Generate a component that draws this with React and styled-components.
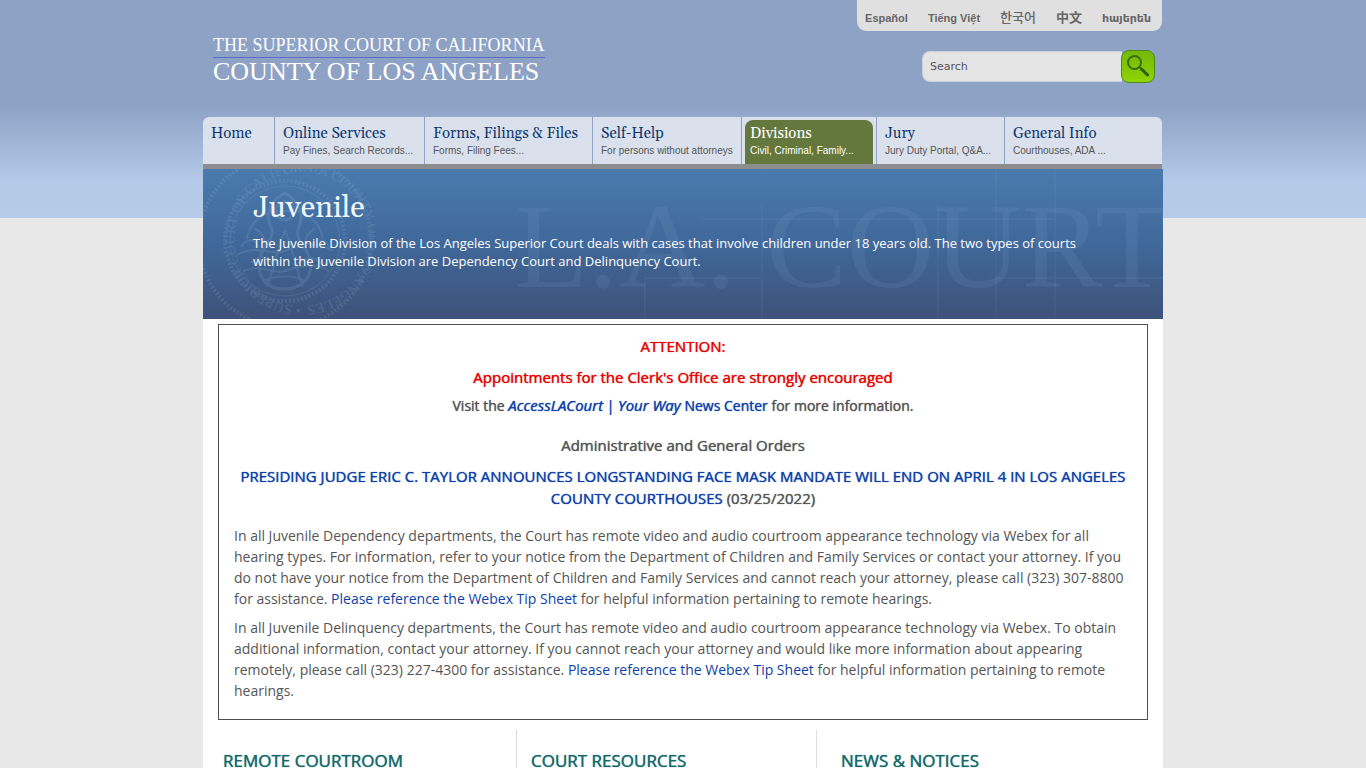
import styled, { createGlobalStyle, css } from 'styled-components';

const languages = [
  { label: 'Español', lang: 'es' },
  { label: 'Tiếng Việt', lang: 'vi' },
  { label: '한국어', lang: 'ko' },
  { label: '中文', lang: 'zh' },
  { label: 'հայերեն', lang: 'hy' },
];

const navItems = [
  { title: 'Home', hint: '', width: 71 },
  { title: 'Online Services', hint: 'Pay Fines, Search Records...', width: 149 },
  { title: 'Forms, Filings & Files', hint: 'Forms, Filing Fees...', width: 167 },
  { title: 'Self-Help', hint: 'For persons without attorneys', width: 148 },
  { title: 'Divisions', hint: 'Civil, Criminal, Family...', width: 134, active: true },
  { title: 'Jury', hint: 'Jury Duty Portal, Q&A...', width: 127 },
  { title: 'General Info', hint: 'Courthouses, ADA ...', width: 157 },
];

const sections = ['Remote Courtroom', 'Court Resources', 'News & Notices'];

function SearchIcon() {
  return <svg width="26" height="26" viewBox="0 0 26 26" fill="none" aria-hidden="true">
    <circle cx="9.5" cy="8.5" r="6.5" stroke="#35700c" strokeWidth="2"/>
    <path d="M14.2 13l2.5 2.3" stroke="#35700c" strokeWidth="2"/>
    <path d="M16.7 15.3l5.8 5.5" stroke="#35600f" strokeWidth="3.2" strokeLinecap="round"/>
  </svg>
}

function Seal() {
  return <SealSvg viewBox="0 0 180 180" aria-hidden="true">
    <defs>
      <path id="seal-ring" d="M106 155a67 67 0 1 1 1 0"/>
    </defs>
    <g fill="none" stroke="#a9c8e6">
      <circle cx="90" cy="90" r="86" strokeWidth="4" strokeDasharray="2 2"/>
      <circle cx="90" cy="90" r="60" strokeWidth="4" strokeDasharray="2 2"/>
      <circle cx="90" cy="90" r="55"/>
      <path strokeWidth="3" d="M90 42c-16 8-20 22-14 34s-14 22-12 40 14 22 26 22 26-8 26-24-18-24-12-38-2-26-14-34z"/>
      <path strokeWidth="2" d="M42 104c20-12 34 2 48-4s28-12 48 0M48 120c18-8 30 4 42 0s30-10 44 0M78 60c-14 4-24 14-26 28M102 60c14 4 24 14 26 28M72 136c8-20 10-40 18-56M108 136c-8-20-10-40-18-56M60 78c8 4 12 12 8 20M120 78c-8 4-12 12-8 20"/>
      <path strokeWidth="2" d="M46 96c6-10 14-8 18 0M116 96c6-10 14-8 18 0M56 112c10-10 18-6 24 4M100 116c8-10 18-12 26-4M70 130c8-6 32-6 40 0M66 66c8-8 40-8 48 0"/>
      <circle cx="90" cy="60" r="9" strokeWidth="3"/>
    </g>
    <text fill="#c0d8ee" fontSize="14">
      <textPath href="#seal-ring">• SUPERIOR COURT OF CALIFORNIA COUNTY OF LOS ANGELES</textPath>
    </text>
  </SealSvg>
}

function Blueprint() {
  return <BlueprintSvg viewBox="0 0 520 150" aria-hidden="true">
    <path
      d="M2 150v-41h117M119 150V36M60 50h59M119 50h176M295 36v114M353 0v150M353 109h167M412 0v150M295 50h117"
      fill="none" stroke="#9fbfe2" strokeWidth="2"/>
  </BlueprintSvg>
}

function Header() {
  return <HeaderContainer>
    <LogoLink href="#home">
      <LogoTop>THE SUPERIOR COURT OF CALIFORNIA</LogoTop>
      <LogoBottom>COUNTY OF LOS ANGELES</LogoBottom>
    </LogoLink>
    <HeaderTools>
      <LanguageBar aria-label="Languages">
        { languages.map(({ label, lang }) => <LanguageLink key={lang} lang={lang} href={`#${lang}`}>
          { label }
        </LanguageLink>) }
      </LanguageBar>
      <SearchForm role="search" onSubmit={(e) => e.preventDefault()}>
        <SearchInput type="text" placeholder="Search" aria-label="Search"/>
        <SearchButton type="submit" aria-label="Submit search">
          <SearchIcon/>
        </SearchButton>
      </SearchForm>
    </HeaderTools>
  </HeaderContainer>
}

function Navigation() {
  return <NavContainer>
    { navItems.map(({ title, hint, width, active }) => <NavCell key={title} $basis={width}>
      <NavLink href="#nav" $active={active}>
        <NavTitle $active={active}>{ title }</NavTitle>
        <NavHint>{ hint }</NavHint>
      </NavLink>
    </NavCell>) }
  </NavContainer>
}

function Banner() {
  return <BannerContainer>
    <Seal/>
    <Blueprint/>
    <BannerMark aria-hidden="true">L.A. COURT</BannerMark>
    <BannerTitle>Juvenile</BannerTitle>
    <BannerText>
      The Juvenile Division of the Los Angeles Superior Court deals with cases that involve children
      under 18 years old. The two types of courts within the Juvenile Division are Dependency Court
      and Delinquency Court.
    </BannerText>
  </BannerContainer>
}

function Notice() {
  return <NoticeContainer>
    <NoticeHeading $alert>ATTENTION:</NoticeHeading>
    <NoticeHeading $alert>Appointments for the Clerk's Office are strongly encouraged</NoticeHeading>
    <NoticeLead>
      Visit the <Link href="#news"><em>AccessLACourt</em> | <em>Your Way</em> News Center</Link> for
      more information.
    </NoticeLead>
    <NoticeHeading>Administrative and General Orders</NoticeHeading>
    <NoticeHeading>
      <Link href="#order">
        PRESIDING JUDGE ERIC C. TAYLOR ANNOUNCES LONGSTANDING FACE MASK MANDATE WILL END ON APRIL 4
        IN LOS ANGELES COUNTY COURTHOUSES
      </Link> (03/25/2022)
    </NoticeHeading>
    <NoticeBody>
      <Paragraph>
        In all Juvenile Dependency departments, the Court has remote video and audio courtroom
        appearance technology via Webex for all hearing types. For information, refer to your notice
        from the Department of Children and Family Services or contact your attorney. If you do not
        have your notice from the Department of Children and Family Services and cannot reach your
        attorney, please call (323) 307-8800 for assistance. <Link href="#tips">Please reference the
        Webex Tip Sheet</Link> for helpful information pertaining to remote hearings.
      </Paragraph>
      <Paragraph>
        In all Juvenile Delinquency departments, the Court has remote video and audio courtroom
        appearance technology via Webex. To obtain additional information, contact your attorney. If
        you cannot reach your attorney and would like more information about appearing remotely,
        please call (323) 227-4300 for assistance. <Link href="#tips">Please reference the Webex Tip
        Sheet</Link> for helpful information pertaining to remote hearings.
      </Paragraph>
    </NoticeBody>
  </NoticeContainer>
}

function App() {
  return <>
    <GlobalStyle/>
    <Page>
      <Header/>
      <Navigation/>
      <Main>
        <Banner/>
        <Notice/>
        <Columns>
          { sections.map((section) => <Column key={section}>
            <ColumnTitle>{ section }</ColumnTitle>
          </Column>) }
        </Columns>
      </Main>
    </Page>
  </>
}

const GlobalStyle = createGlobalStyle`
  * {
    box-sizing: border-box;
  }

  body {
    background: #e8e8e8 linear-gradient(#8ea2c5 0, #8ea2c5 105px, #b3c9e7 180px, #b6cbe8 218px) no-repeat 0 0 / 100% 218px;
    color: #555;
    font-family: 'Open Sans', 'Noto Sans', sans-serif;
    margin: 0;
  }
`;

// Thickens the regular face while keeping its letter widths
const fauxBold = css`
  font-weight: 400;
  text-shadow: 0 0 1px currentColor;
`;

const Page = styled.div`
  margin: 0 auto;
  max-width: 960px;
`;

const HeaderContainer = styled.header`
  display: flex;
  height: 117px;
  justify-content: space-between;
  padding: 0 1px 0 10px;
`;

const LogoLink = styled.a`
  color: white;
  font-family: 'Liberation Serif', serif;
  padding-top: 35px;
  text-decoration: none;
`;

const LogoTop = styled.div`
  border-bottom: 1px solid #5b6cc4;
  font-size: 18px;
  line-height: 20px;
  padding-bottom: 2px;
`;

const LogoBottom = styled.div`
  font-size: 26px;
  line-height: 28px;
`;

const HeaderTools = styled.div`
  align-items: flex-end;
  display: flex;
  flex-direction: column;
  gap: 19px;
`;

const LanguageBar = styled.nav`
  align-items: center;
  background-color: #e0e0e0;
  border-radius: 0 0 9px 9px;
  display: flex;
  gap: 20px;
  height: 31px;
  padding: 4px 11px 0 8px;
`;

const LanguageLink = styled.a`
  color: #666;
  font-family: 'Liberation Sans', 'Noto Sans CJK KR', 'DejaVu Sans', sans-serif;
  font-size: 11px;
  font-weight: bold;
  line-height: 16px;
  text-decoration: none;

  &:lang(ko), &:lang(zh) {
    font-size: 13px;
  }

  &:lang(ko) {
    font-weight: 500;
  }
`;

const SearchForm = styled.form`
  align-items: center;
  display: flex;
  padding-right: 7px;
`;

const SearchInput = styled.input`
  background-color: #e4e4e4;
  border: 1px solid #c9cfdb;
  border-radius: 8px 0 0 8px;
  border-right: none;
  color: #555;
  font-family: 'DejaVu Sans', sans-serif;
  font-size: 11px;
  height: 31px;
  outline: none;
  padding: 0 7px;
  width: 200px;

  &::placeholder {
    color: #555;
    opacity: 1;
  }
`;

const SearchButton = styled.button`
  align-items: center;
  background: linear-gradient(#72b80c, #8fd400);
  border: 1px solid #4d8a10;
  border-radius: 8px;
  cursor: pointer;
  display: flex;
  height: 33px;
  justify-content: center;
  margin-left: -1px;
  padding: 0;
  width: 34px;
`;

const NavContainer = styled.nav`
  background-color: #dae1ed;
  border-bottom: 5px solid #8d8d90;
  border-radius: 6px 6px 0 0;
  display: flex;
  height: 52px;
  margin-right: 1px;
`;

const NavCell = styled.div`
  display: flex;
  flex: ${(props) => props.$basis} 1 0;

  & + & {
    border-left: 1px solid #8ea2c5;
  }
`;

const NavLink = styled.a`
  color: #555;
  flex: 1;
  padding: 8px 0 0 8px;
  text-decoration: none;
  white-space: nowrap;

  ${(props) => props.$active && css`
    background-color: #64783e;
    border-radius: 8px 8px 0 0;
    color: white;
    margin: 3px 3px 0 3px;
    padding: 5px 0 0 5px;
  `}
`;

const NavTitle = styled.div`
  color: ${(props) => props.$active ? 'white' : '#103a70'};
  font-family: Georgia, Gelasio, 'Liberation Serif', serif;
  font-size: 15px;
  line-height: 18px;
`;

const NavHint = styled.div`
  font-family: 'Liberation Sans', sans-serif;
  font-size: 10px;
  line-height: 16px;
`;

const Main = styled.main`
  background-color: white;
  padding-bottom: 30px;
`;

const BannerContainer = styled.section`
  background: linear-gradient(#4a7aae, #40689a 50%, #3d5279);
  color: white;
  height: 150px;
  overflow: hidden;
  padding: 20px 50px;
  position: relative;
`;

const SealSvg = styled.svg`
  font-family: 'Liberation Serif', serif;
  height: 180px;
  left: -8px;
  opacity: 0.14;
  position: absolute;
  top: -18px;
  width: 180px;
`;

const BlueprintSvg = styled.svg`
  height: 150px;
  opacity: 0.06;
  position: absolute;
  right: 0;
  top: 0;
  width: 520px;
`;

const BannerMark = styled.div`
  color: rgba(150, 180, 220, 0.11);
  font-family: 'Liberation Serif', serif;
  font-size: 121px;
  line-height: 150px;
  position: absolute;
  right: -6px;
  top: 2px;
  white-space: nowrap;
`;

const BannerTitle = styled.h1`
  color: #eef6fc;
  font-family: Georgia, Gelasio, 'Liberation Serif', serif;
  font-size: 30px;
  font-weight: normal;
  line-height: 38px;
  margin: 0 0 7px;
  position: relative;
`;

const BannerText = styled.p`
  font-size: 13px;
  line-height: 18px;
  margin: 0;
  position: relative;
`;

const NoticeContainer = styled.section`
  border: 1px solid #4f4f4f;
  margin: 5px 15px 10px;
  padding: 10px 15px;
  text-align: center;
`;

const NoticeHeading = styled.h2`
  ${fauxBold}
  color: ${(props) => props.$alert ? '#e60000' : '#555'};
  font-size: 15px;
  line-height: 22px;
  margin: 0 0 7px;

  & + & {
    margin-top: 9px;
  }
`;

const NoticeLead = styled.p`
  ${fauxBold}
  font-size: 14px;
  line-height: 21px;
  margin: 0 0 18px;

  em {
    font-size: 15px;
  }
`;

const Link = styled.a`
  color: #0f3fa8;
  text-decoration: none;
`;

const NoticeBody = styled.div`
  margin-top: 16px;
  text-align: left;
`;

const Paragraph = styled.p`
  font-size: 14px;
  line-height: 21px;
  margin: 0 0 8px;
`;

const Columns = styled.div`
  display: grid;
  grid-template-columns: 313fr 300fr 347fr;
`;

const Column = styled.section`
  min-height: 60px;
  padding: 18px 20px;

  & + & {
    border-left: 1px solid #dcdcdc;
    padding-left: 14px;
  }

  & + & + & {
    padding-left: 24px;
  }
`;

const ColumnTitle = styled.h2`
  ${fauxBold}
  color: #17686b;
  font-size: 17px;
  line-height: 26px;
  margin: 0;
  text-transform: uppercase;
`;

export default App;
